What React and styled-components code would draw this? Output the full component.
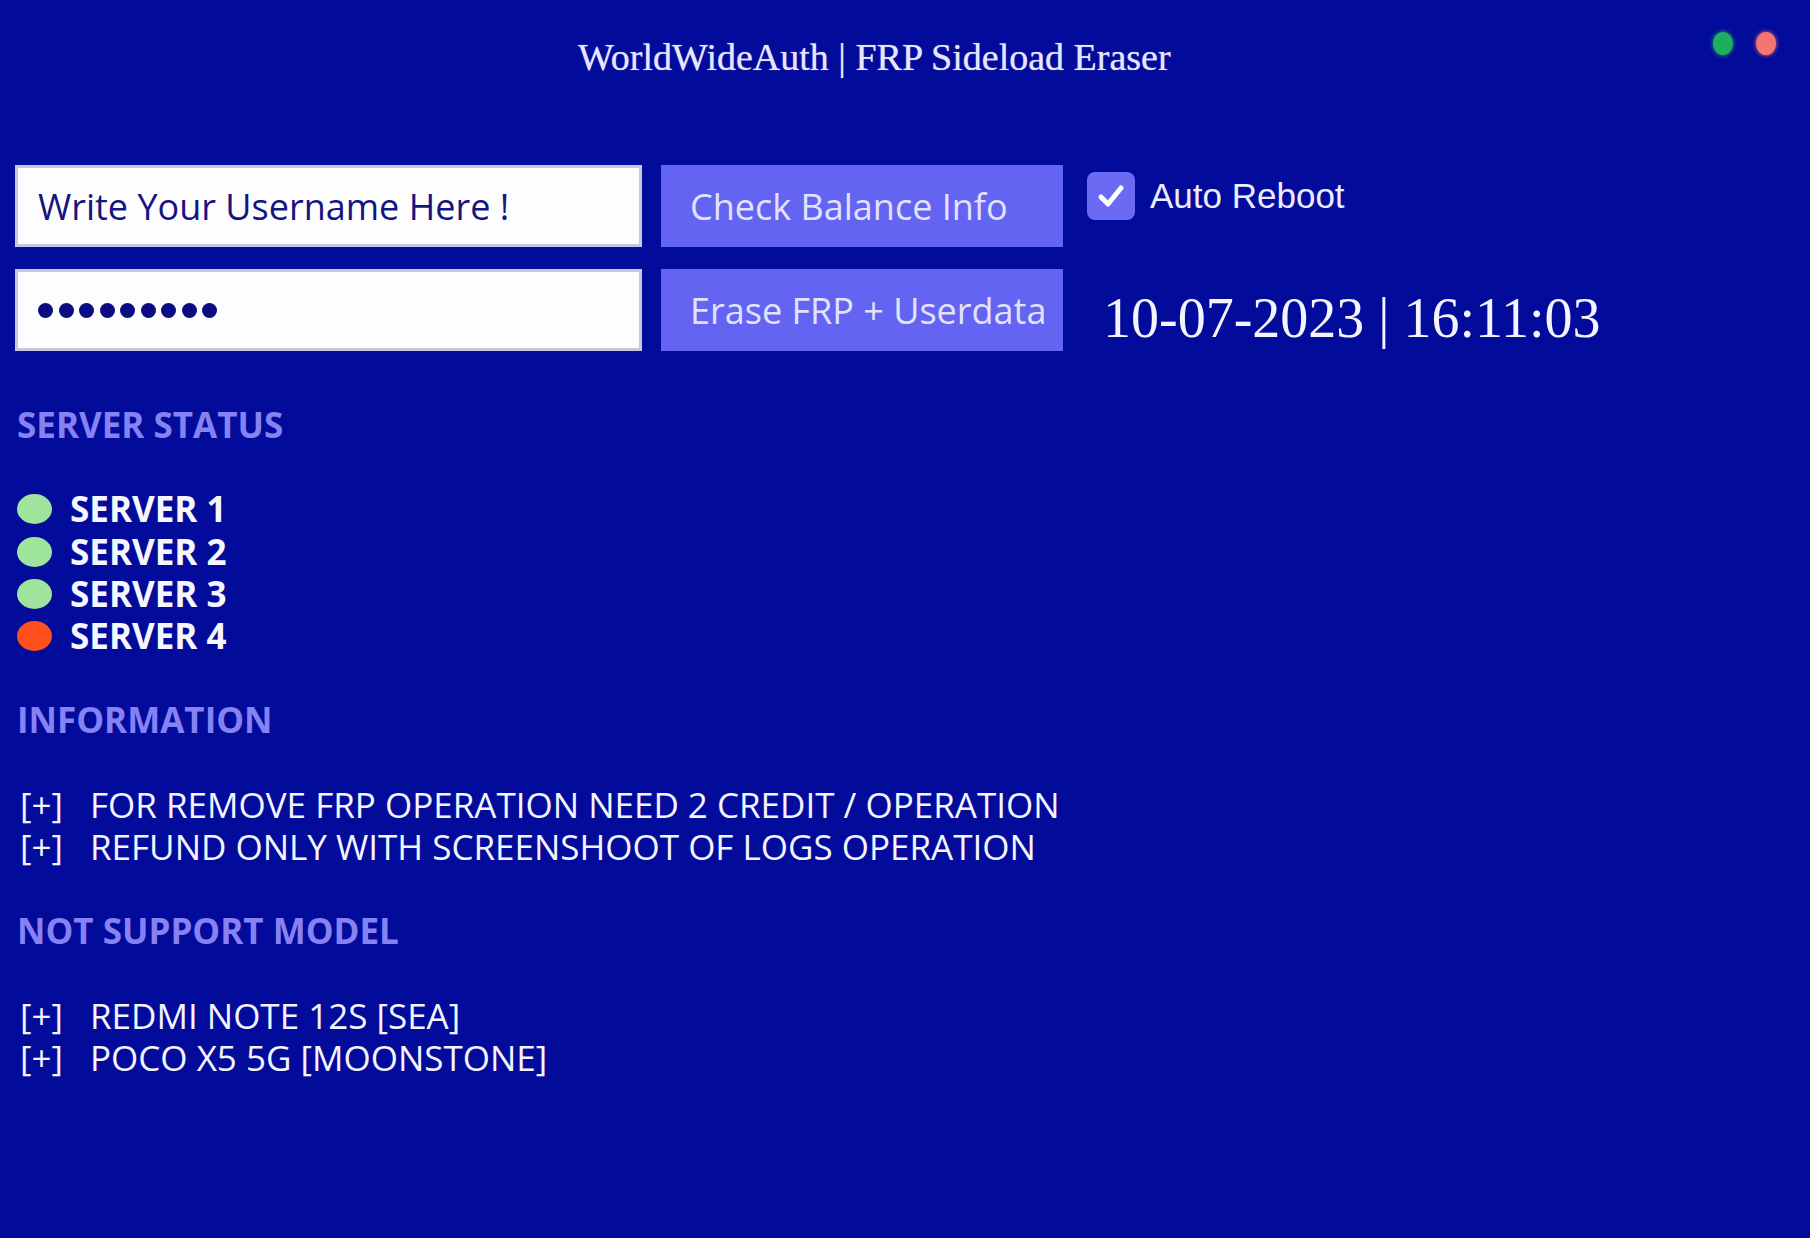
import React from "react";
import styled, { createGlobalStyle } from "styled-components";

const GlobalStyle = createGlobalStyle`
  html, body { margin: 0; padding: 0; background: #030b9a; }
  #root { min-height: 100vh; }
  * { box-sizing: border-box; }
`;

const Window = styled.div`
  width: 1810px;
  height: 1238px;
  background: #030b9a;
  overflow: hidden;
  font-family: "Open Sans", "Noto Sans", sans-serif;
  color: #f2f2ff;
`;

const TitleBar = styled.div`
  display: flex;
  align-items: flex-start;
  height: 165px;
  padding: 0 34px 0 578px;
`;

const Title = styled.div`
  margin-top: 38px;
  font-family: "Liberation Serif", "Times New Roman", serif;
  font-size: 38px;
  line-height: 38px;
  color: #e6e6ff;
  white-space: nowrap;
  text-shadow: 0 0 1px rgba(230, 230, 255, 0.7);
`;

const Controls = styled.div`
  margin-left: auto;
  margin-top: 32px;
  display: flex;
  gap: 23px;
`;

const Light = styled.span`
  width: 20px;
  height: 23px;
  border-radius: 50%;
  background: ${(p) => p.$color};
  box-shadow: 0 0 4px ${(p) => p.$color};
`;

const Form = styled.div`
  display: grid;
  grid-template-columns: 627px 402px auto;
  grid-template-rows: 82px 82px;
  column-gap: 19px;
  row-gap: 22px;
  padding-left: 15px;
`;

const Field = styled.div`
  display: flex;
  align-items: center;
  background: #fdfdff;
  border: 3px solid #c6c8dc;
  padding-left: 20px;
  font-size: 36px;
  color: #15157f;
  white-space: nowrap;
`;

const Dots = styled.div`
  display: flex;
  gap: 5.5px;
`;

const Dot = styled.span`
  width: 15px;
  height: 15px;
  border-radius: 50%;
  background: #0c0c82;
`;

const Button = styled.button`
  display: flex;
  align-items: center;
  border: none;
  margin: 0;
  padding: 0 0 0 29px;
  background: #6464f2;
  color: #e2e2ff;
  font-family: "Open Sans", "Noto Sans", sans-serif;
  font-size: 36px;
  text-align: left;
  white-space: nowrap;
  cursor: pointer;
`;

const CheckRow = styled.label`
  display: flex;
  align-items: center;
  align-self: start;
  gap: 15px;
  margin-top: 7px;
  margin-left: 5px;
  font-family: "Liberation Sans", Arial, sans-serif;
  font-size: 35px;
  color: #ececff;
  white-space: nowrap;
`;

const Box = styled.span`
  width: 48px;
  height: 48px;
  border-radius: 8px;
  background: #6a6af2;
  display: flex;
  align-items: center;
  justify-content: center;
`;

const Clock = styled.div`
  display: flex;
  align-items: center;
  padding: 16px 0 0 21px;
  font-family: "Liberation Serif", "Times New Roman", serif;
  font-size: 56px;
  line-height: 56px;
  color: #f4f4ff;
  white-space: nowrap;
`;

const Content = styled.div`
  margin-top: 53px;
  padding-left: 17px;
  font-size: 35px;
  line-height: 42.2px;
`;

const Section = styled.section`
  margin-bottom: 42.2px;
`;

const Heading = styled.div`
  font-weight: 700;
  color: #8682f3;
  margin-bottom: 42.2px;
  white-space: nowrap;
`;

const ServerRow = styled.div`
  display: flex;
  align-items: center;
  gap: 18px;
  height: 42.2px;
  font-weight: 700;
  color: #f6f6ff;
`;

const Status = styled.span`
  width: 35px;
  height: 30px;
  border-radius: 50%;
  background: ${(p) => (p.$up ? "#9ee49c" : "#ff4f1c")};
`;

const Line = styled.div`
  display: flex;
  padding-left: 3px;
  color: #f4f4ff;
  white-space: nowrap;
`;

const Bullet = styled.span`
  width: 70px;
  flex: none;
`;

const servers = [
  { name: "SERVER 1", up: true },
  { name: "SERVER 2", up: true },
  { name: "SERVER 3", up: true },
  { name: "SERVER 4", up: false },
];

const info = [
  "FOR REMOVE FRP OPERATION NEED 2 CREDIT / OPERATION",
  "REFUND ONLY WITH SCREENSHOOT OF LOGS OPERATION",
];

const models = ["REDMI NOTE 12S [SEA]", "POCO X5 5G [MOONSTONE]"];

export default function App() {
  return (
    <Window>
      <GlobalStyle />
      <TitleBar>
        <Title>WorldWideAuth | FRP Sideload Eraser</Title>
        <Controls>
          <Light $color="#1fae5c" />
          <Light $color="#f5766f" />
        </Controls>
      </TitleBar>

      <Form>
        <Field>Write Your Username Here !</Field>
        <Button>Check Balance Info</Button>
        <CheckRow>
          <Box>
            <svg width="30" height="30" viewBox="0 0 30 30">
              <polyline
                points="5,16 12,23 25,7"
                fill="none"
                stroke="#ffffff"
                strokeWidth="5"
                strokeLinecap="round"
                strokeLinejoin="round"
              />
            </svg>
          </Box>
          Auto Reboot
        </CheckRow>
        <Field>
          <Dots>
            {Array.from({ length: 9 }).map((_, i) => (
              <Dot key={i} />
            ))}
          </Dots>
        </Field>
        <Button>Erase FRP + Userdata</Button>
        <Clock>10-07-2023 | 16:11:03</Clock>
      </Form>

      <Content>
        <Section>
          <Heading>SERVER STATUS</Heading>
          {servers.map((s) => (
            <ServerRow key={s.name}>
              <Status $up={s.up} />
              {s.name}
            </ServerRow>
          ))}
        </Section>
        <Section>
          <Heading>INFORMATION</Heading>
          {info.map((t) => (
            <Line key={t}>
              <Bullet>[+]</Bullet>
              {t}
            </Line>
          ))}
        </Section>
        <Section>
          <Heading>NOT SUPPORT MODEL</Heading>
          {models.map((t) => (
            <Line key={t}>
              <Bullet>[+]</Bullet>
              {t}
            </Line>
          ))}
        </Section>
      </Content>
    </Window>
  );
}
